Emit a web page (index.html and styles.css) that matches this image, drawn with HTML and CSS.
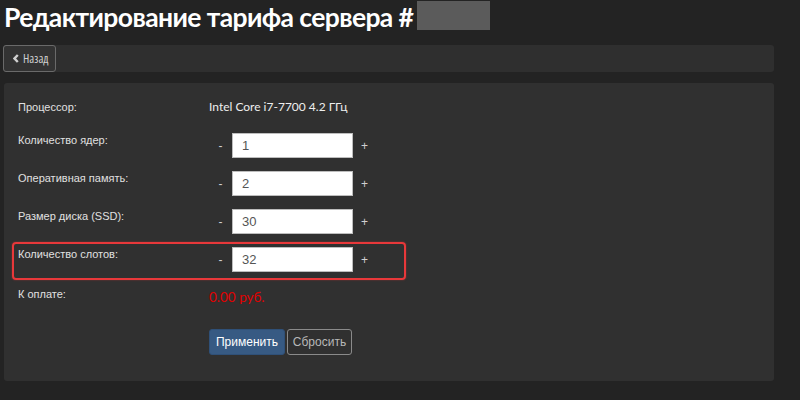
FILE: index.html
```html
<!DOCTYPE html>
<html lang="ru">
<head>
<meta charset="utf-8">
<title>Редактирование тарифа сервера</title>
<link rel="stylesheet" href="styles.css">
</head>
<body>
<div class="page">
  <header class="head">
    <h1 class="title">Редактирование тарифа сервера #</h1>
    <span class="redacted"></span>
  </header>
  <div class="toolbar">
    <button class="back" type="button">
      <svg class="chev" width="6" height="9" viewBox="0 0 6 9"><path d="M4.8 1 L1.5 4.5 L4.8 8" fill="none" stroke="#d0d0d0" stroke-width="2.4"/></svg>
      <span>Назад</span>
    </button>
  </div>
  <section class="panel">
    <div class="row row-first">
      <div class="label">Процессор:</div>
      <div class="value">Intel Core i7-7700 4.2 ГГц</div>
    </div>
    <div class="row">
      <div class="label">Количество ядер:</div>
      <div class="ctrl"><span class="step">-</span><input class="num" value="1"><span class="step plus">+</span></div>
    </div>
    <div class="row">
      <div class="label">Оперативная память:</div>
      <div class="ctrl"><span class="step">-</span><input class="num" value="2"><span class="step plus">+</span></div>
    </div>
    <div class="row">
      <div class="label">Размер диска (SSD):</div>
      <div class="ctrl"><span class="step">-</span><input class="num" value="30"><span class="step plus">+</span></div>
    </div>
    <div class="row row-mark">
      <div class="label">Количество слотов:</div>
      <div class="ctrl"><span class="step">-</span><input class="num" value="32"><span class="step plus">+</span></div>
      <div class="mark"></div>
    </div>
    <div class="row row-pay">
      <div class="label">К оплате:</div>
      <div class="price">0.00 руб.</div>
    </div>
    <div class="row row-btns">
      <div class="label"></div>
      <div class="btns">
        <button class="btn btn-primary" type="button">Применить</button>
        <button class="btn btn-reset" type="button">Сбросить</button>
      </div>
    </div>
  </section>
</div>
</body>
</html>
```
FILE: styles.css
```css
html, body {
  margin: 0;
  padding: 0;
  background: #232323;
  height: 100%;
}
body {
  font-family: "Liberation Sans", Arial, sans-serif;
  color: #ddd;
  overflow: hidden;
}
.page {
  width: 770px;
  margin-left: 4px;
}
.head {
  display: flex;
  align-items: flex-start;
  height: 45px;
}
.title {
  margin: 0;
  font-family: Lato, "Open Sans", sans-serif;
  font-weight: 700;
  font-size: 26.5px;
  line-height: 34px;
  letter-spacing: -0.6px;
  color: #fff;
  white-space: nowrap;
}
.redacted {
  display: block;
  width: 73px;
  height: 29px;
  margin: 1px 0 0 4px;
  background: #5b5b5b;
}
.toolbar {
  height: 27px;
  background: #2f2f2f;
  border-radius: 3px;
  display: flex;
  margin-left: -1px;
}
.back {
  display: flex;
  align-items: center;
  gap: 4px;
  width: 53px;
  height: 27px;
  padding: 0 0 0 9px;
  margin: 0;
  background: #333;
  border: 1px solid #6a6a6a;
  border-radius: 3px;
  color: #cfcfcf;
  font-family: "Open Sans", "Liberation Sans", sans-serif;
  font-stretch: 75%;
  font-size: 12px;
  box-sizing: border-box;
}
.chev { display: block; }
.panel {
  margin-top: 11px;
  height: 298px;
  box-sizing: border-box;
  padding: 17px 0 0 14px;
  background: #303030;
  border-radius: 3px;
}
.row {
  display: flex;
  align-items: flex-start;
  height: 38px;
  position: relative;
}
.row-first { height: 33px; }
.label {
  width: 191px;
  flex: none;
  font-size: 11px;
  line-height: 14px;
  color: #e0e0e0;
}
.value {
  font-family: Lato, "Liberation Sans", sans-serif;
  font-size: 12px;
  line-height: 14px;
  color: #eee;
}
.ctrl {
  display: flex;
  align-items: center;
  height: 25px;
}
.step {
  width: 23px;
  text-align: center;
  font-size: 12px;
  color: #d0d0d0;
}
.plus { width: 23px; }
.num {
  width: 121px;
  height: 25px;
  box-sizing: border-box;
  margin: 0;
  border: 1px solid #bdbdbd;
  background: #fff;
  padding: 0 0 0 9px;
  font-family: "Liberation Sans", Arial, sans-serif;
  font-size: 13px;
  color: #555;
  outline: none;
}
.mark {
  position: absolute;
  left: -6px;
  top: -5px;
  width: 394px;
  height: 38px;
  box-sizing: border-box;
  border: 2px solid #e8383a;
  border-radius: 4px;
  box-shadow: 0 0 2px rgba(232, 56, 58, 0.5);
  pointer-events: none;
}
.row-pay {
  height: 44px;
  padding-top: 2px;
  box-sizing: border-box;
}
.price {
  font-family: Lato, "Liberation Sans", sans-serif;
  font-size: 13.5px;
  line-height: 18px;
  margin-top: 1px;
  color: #e00000;
}
.row-btns { height: 26px; }
.btns {
  display: flex;
  gap: 2px;
}
.btn {
  height: 26px;
  margin: 0;
  border-radius: 3px;
  font-family: "Liberation Sans", Arial, sans-serif;
  font-size: 12px;
  box-sizing: border-box;
  padding: 0;
}
.btn-primary {
  width: 76px;
  background: #375a83;
  border: 1px solid #2f5078;
  color: #fff;
}
.btn-reset {
  width: 65px;
  background: transparent;
  border: 1px solid #8a8a8a;
  color: #b8b8b8;
}
```
